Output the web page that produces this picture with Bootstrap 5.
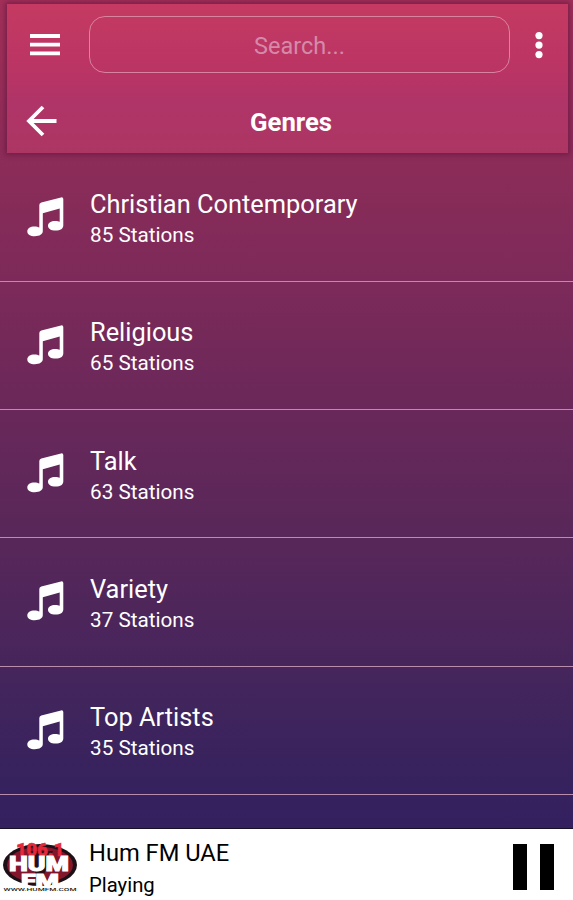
<!DOCTYPE html>
<html lang="en">
<head>
<meta charset="utf-8">
<meta name="viewport" content="width=device-width, initial-scale=1">
<title>Genres</title>
<link href="https://cdn.jsdelivr.net/npm/bootstrap@5.3.0/dist/css/bootstrap.min.css" rel="stylesheet">
<style>
body { font-family: Roboto, "Liberation Sans", sans-serif; height: 900px; overflow: hidden; }
.app { height: 900px; background: linear-gradient(#a33059 0, #8c2c58 160px, #7c2a5a 285px, #692859 410px, #582759 540px, #44255c 680px, #35225e 790px, #34205e 828px); }
.top-panel { margin: 4px 5px 0 7px; height: 149px; background: linear-gradient(#c43a62, #ba3464 45%, #b03468 65%, #ac3663); box-shadow: 0 0 5px 2px rgba(95,20,62,.6); }
.bar-row { height: 82px; padding: 12px 25px 13px 23px; }
.search-box, .search-box:focus { width: 421px; height: 57px; margin-left: 29px; border: 1px solid #d9839f; border-radius: 16px; background: transparent; color: #fff; font-size: 23.5px; padding: 3px 0 0; box-shadow: none; }
.search-box::placeholder { color: #d58aa9; opacity: 1; }
.title-row { height: 67px; padding: 2px 0 0 19px; }
.page-title { font-size: 25.7px; font-weight: 700; margin-left: 193px; line-height: 30px; padding-top: 3px; }
.genre { height: 128.25px; padding: 4px 0 0 27px; border-bottom: 1px solid #b98dab; }
.genre-list { height: 675px; padding-top: .6px; overflow: hidden; }
.genre-name { font-size: 25.4px; line-height: 32px; }
.genre-count { font-size: 20.7px; line-height: 30px; }
.genre-text { margin-left: 26px; }
.genre svg { margin-top: -5px; }
.player { height: 72px; border-top: 1px solid #171029; padding: 0 19px 0 2px; }
.station { font-size: 23.7px; line-height: 32px; }
.state { font-size: 20.3px; line-height: 32px; }
.player-text { margin-left: 11px; padding-top: 9px; }
.pause-bar { width: 14px; height: 46px; background: #000; }
.pause-button { gap: 13px; }
</style>
</head>
<body>
<svg class="d-none" xmlns="http://www.w3.org/2000/svg">
  <symbol id="note" viewBox="0 0 37 40">
    <path fill="#fff" d="M12.300 8Q12.300 6 14.300 5.500L34 .4Q36.300 0 36.300 2V28.500C36.300 31.500 33.500 33.600 28.500 33.600C24 33.600 21 31.700 21 28.700C21 25.700 24 23.900 28.300 23.900C30.200 23.900 31.600 24.200 32.700 24.800V11.500L15.800 16.200V34C15.800 37.200 12.500 39.200 7.800 39.200C3.200 39.200 .3 37.300 .3 34.400C.3 31.500 3.300 29.500 7.500 29.500C9.500 29.500 11.200 29.900 12.300 30.600Z"/>
  </symbol>
</svg>
<div class="app d-flex flex-column">
  <header class="top-panel flex-shrink-0 text-white">
    <div class="bar-row d-flex align-items-center">
      <svg width="30" height="24" viewBox="0 0 30 24" stroke="#fff" stroke-width="3.8"><path d="M0 3H30M0 11.600H30M0 20.300H30"/></svg>
      <input class="search-box form-control text-center" type="text" placeholder="Search..." aria-label="Search">
      <svg class="ms-auto" width="8" height="28" viewBox="0 0 8 28" fill="#fff"><circle cx="4" cy="4.600" r="3.600"/><circle cx="4" cy="14.100" r="3.600"/><circle cx="4" cy="23.600" r="3.600"/></svg>
    </div>
    <div class="title-row d-flex align-items-center">
      <svg width="31" height="32" viewBox="0 0 31 32" fill="none" stroke="#fff" stroke-width="3.800"><path d="M30.500 16H3M17 2L3 16L17 30"/></svg>
      <h1 class="page-title mb-0">Genres</h1>
    </div>
  </header>
  <main class="genre-list text-white">
    <div class="genre d-flex align-items-center"><svg width="37" height="40"><use href="#note"/></svg><div class="genre-text"><div class="genre-name">Christian Contemporary</div><div class="genre-count">85 Stations</div></div></div>
    <div class="genre d-flex align-items-center"><svg width="37" height="40"><use href="#note"/></svg><div class="genre-text"><div class="genre-name">Religious</div><div class="genre-count">65 Stations</div></div></div>
    <div class="genre d-flex align-items-center"><svg width="37" height="40"><use href="#note"/></svg><div class="genre-text"><div class="genre-name">Talk</div><div class="genre-count">63 Stations</div></div></div>
    <div class="genre d-flex align-items-center"><svg width="37" height="40"><use href="#note"/></svg><div class="genre-text"><div class="genre-name">Variety</div><div class="genre-count">37 Stations</div></div></div>
    <div class="genre d-flex align-items-center"><svg width="37" height="40"><use href="#note"/></svg><div class="genre-text"><div class="genre-name">Top Artists</div><div class="genre-count">35 Stations</div></div></div>
  </main>
  <footer class="player d-flex align-items-center bg-white text-black flex-shrink-0">
    <svg width="76" height="56" viewBox="0 0 76 56" font-family="Roboto, sans-serif" font-weight="900" text-anchor="middle">
      <ellipse cx="38" cy="28" rx="37" ry="21" fill="#1c1016"/>
      <ellipse cx="38" cy="28" rx="33" ry="18" fill="#82162c"/>
      <path d="M25 14L38 48L51 14Z" fill="#25101a"/>
      <text x="38" y="18.500" font-size="18" textLength="48" lengthAdjust="spacingAndGlyphs" fill="#e3293a" stroke="#e3293a" stroke-width=".5">106.1</text>
      <g fill="#fff" stroke="#fff" stroke-width="1"><text x="37" y="34" font-size="20" textLength="60" lengthAdjust="spacingAndGlyphs">HUM</text><text x="38" y="49.500" font-size="18" textLength="38" lengthAdjust="spacingAndGlyphs">FM</text></g>
      <text x="38" y="54" font-size="4" font-weight="500" textLength="73" lengthAdjust="spacingAndGlyphs" fill="#222">WWW.HUMFM.COM</text>
    </svg>
    <div class="player-text"><div class="station">Hum FM UAE</div><div class="state">Playing</div></div>
    <div class="pause-button ms-auto d-flex pt-1" role="button" aria-label="Pause"><span class="pause-bar"></span><span class="pause-bar"></span></div>
  </footer>
</div>
<script src="https://cdn.jsdelivr.net/npm/bootstrap@5.3.0/dist/js/bootstrap.bundle.min.js"></script>
</body>
</html>
